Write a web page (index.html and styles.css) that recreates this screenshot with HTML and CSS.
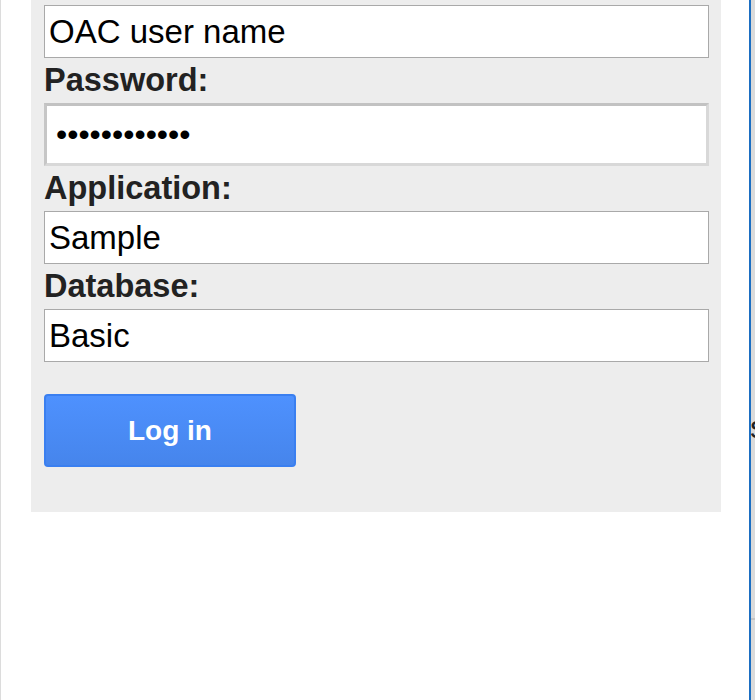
FILE: index.html
```html
<!DOCTYPE html>
<html lang="en">
<head>
<meta charset="utf-8">
<title>Log in</title>
<link rel="stylesheet" href="styles.css">
</head>
<body>
<div class="frame">
  <div class="page">
    <form class="panel">
      <input class="field" type="text" value="OAC user name">
      <label class="label">Password:</label>
      <input class="field field-pass" type="text" value="••••••••••••">
      <label class="label">Application:</label>
      <input class="field" type="text" value="Sample">
      <label class="label">Database:</label>
      <input class="field" type="text" value="Basic">
      <button class="btn" type="button">Log in</button>
    </form>
  </div>
  <div class="divider"></div>
  <div class="side">
    <div class="side-top"><span class="side-text">s</span></div>
    <div class="side-line"></div>
  </div>
</div>
</body>
</html>
```
FILE: styles.css
```css
html, body {
  margin: 0;
  padding: 0;
  background: #ffffff;
}
body {
  height: 700px;
  overflow: hidden;
  font-family: "Liberation Sans", Arial, sans-serif;
}
.frame {
  display: flex;
  height: 700px;
}
.page {
  flex: 0 0 749px;
  box-sizing: border-box;
  border-left: 1px solid #dcdcdc;
  background: #ffffff;
}
.panel {
  display: flex;
  flex-direction: column;
  align-items: flex-start;
  margin: 0 0 0 30px;
  width: 690px;
  box-sizing: border-box;
  padding: 5px 12px 45px 13px;
  background: #ededed;
}
.field {
  display: block;
  width: 665px;
  height: 53px;
  box-sizing: border-box;
  margin: 0;
  padding: 0 4px;
  border: 1px solid #a9a9a9;
  border-radius: 0;
  background: #ffffff;
  color: #000000;
  font-family: "Liberation Sans", Arial, sans-serif;
  font-size: 33px;
  outline: none;
}
.field-pass {
  height: 63px;
  padding: 0 9px;
  border-width: 3px;
  border-style: solid;
  border-color: #c2c2c2 #d8d8d8 #d8d8d8 #c6c6c6;
  font-size: 32px;
}
.label {
  display: block;
  height: 45px;
  line-height: 45px;
  font-size: 32.5px;
  font-weight: bold;
  color: #222222;
}
.btn {
  margin-top: 32px;
  width: 252px;
  height: 73px;
  box-sizing: border-box;
  border: 2px solid #3a7ff0;
  border-radius: 4px;
  background: linear-gradient(#4e91fe, #4685ec);
  color: #ffffff;
  font-family: "Liberation Sans", Arial, sans-serif;
  font-size: 28px;
  font-weight: bold;
  padding: 0;
}
.divider {
  flex: 0 0 2px;
  background: #1b6ec2;
}
.side {
  flex: 1;
  display: flex;
  flex-direction: column;
  background: #dadada;
  overflow: hidden;
}
.side-top {
  height: 618px;
  box-sizing: border-box;
  padding-top: 411px;
  margin-left: -1px;
  font-size: 32px;
  line-height: 32px;
  color: #222222;
  white-space: nowrap;
}
.side-line {
  height: 2px;
  background: #c4c4c4;
}
```
